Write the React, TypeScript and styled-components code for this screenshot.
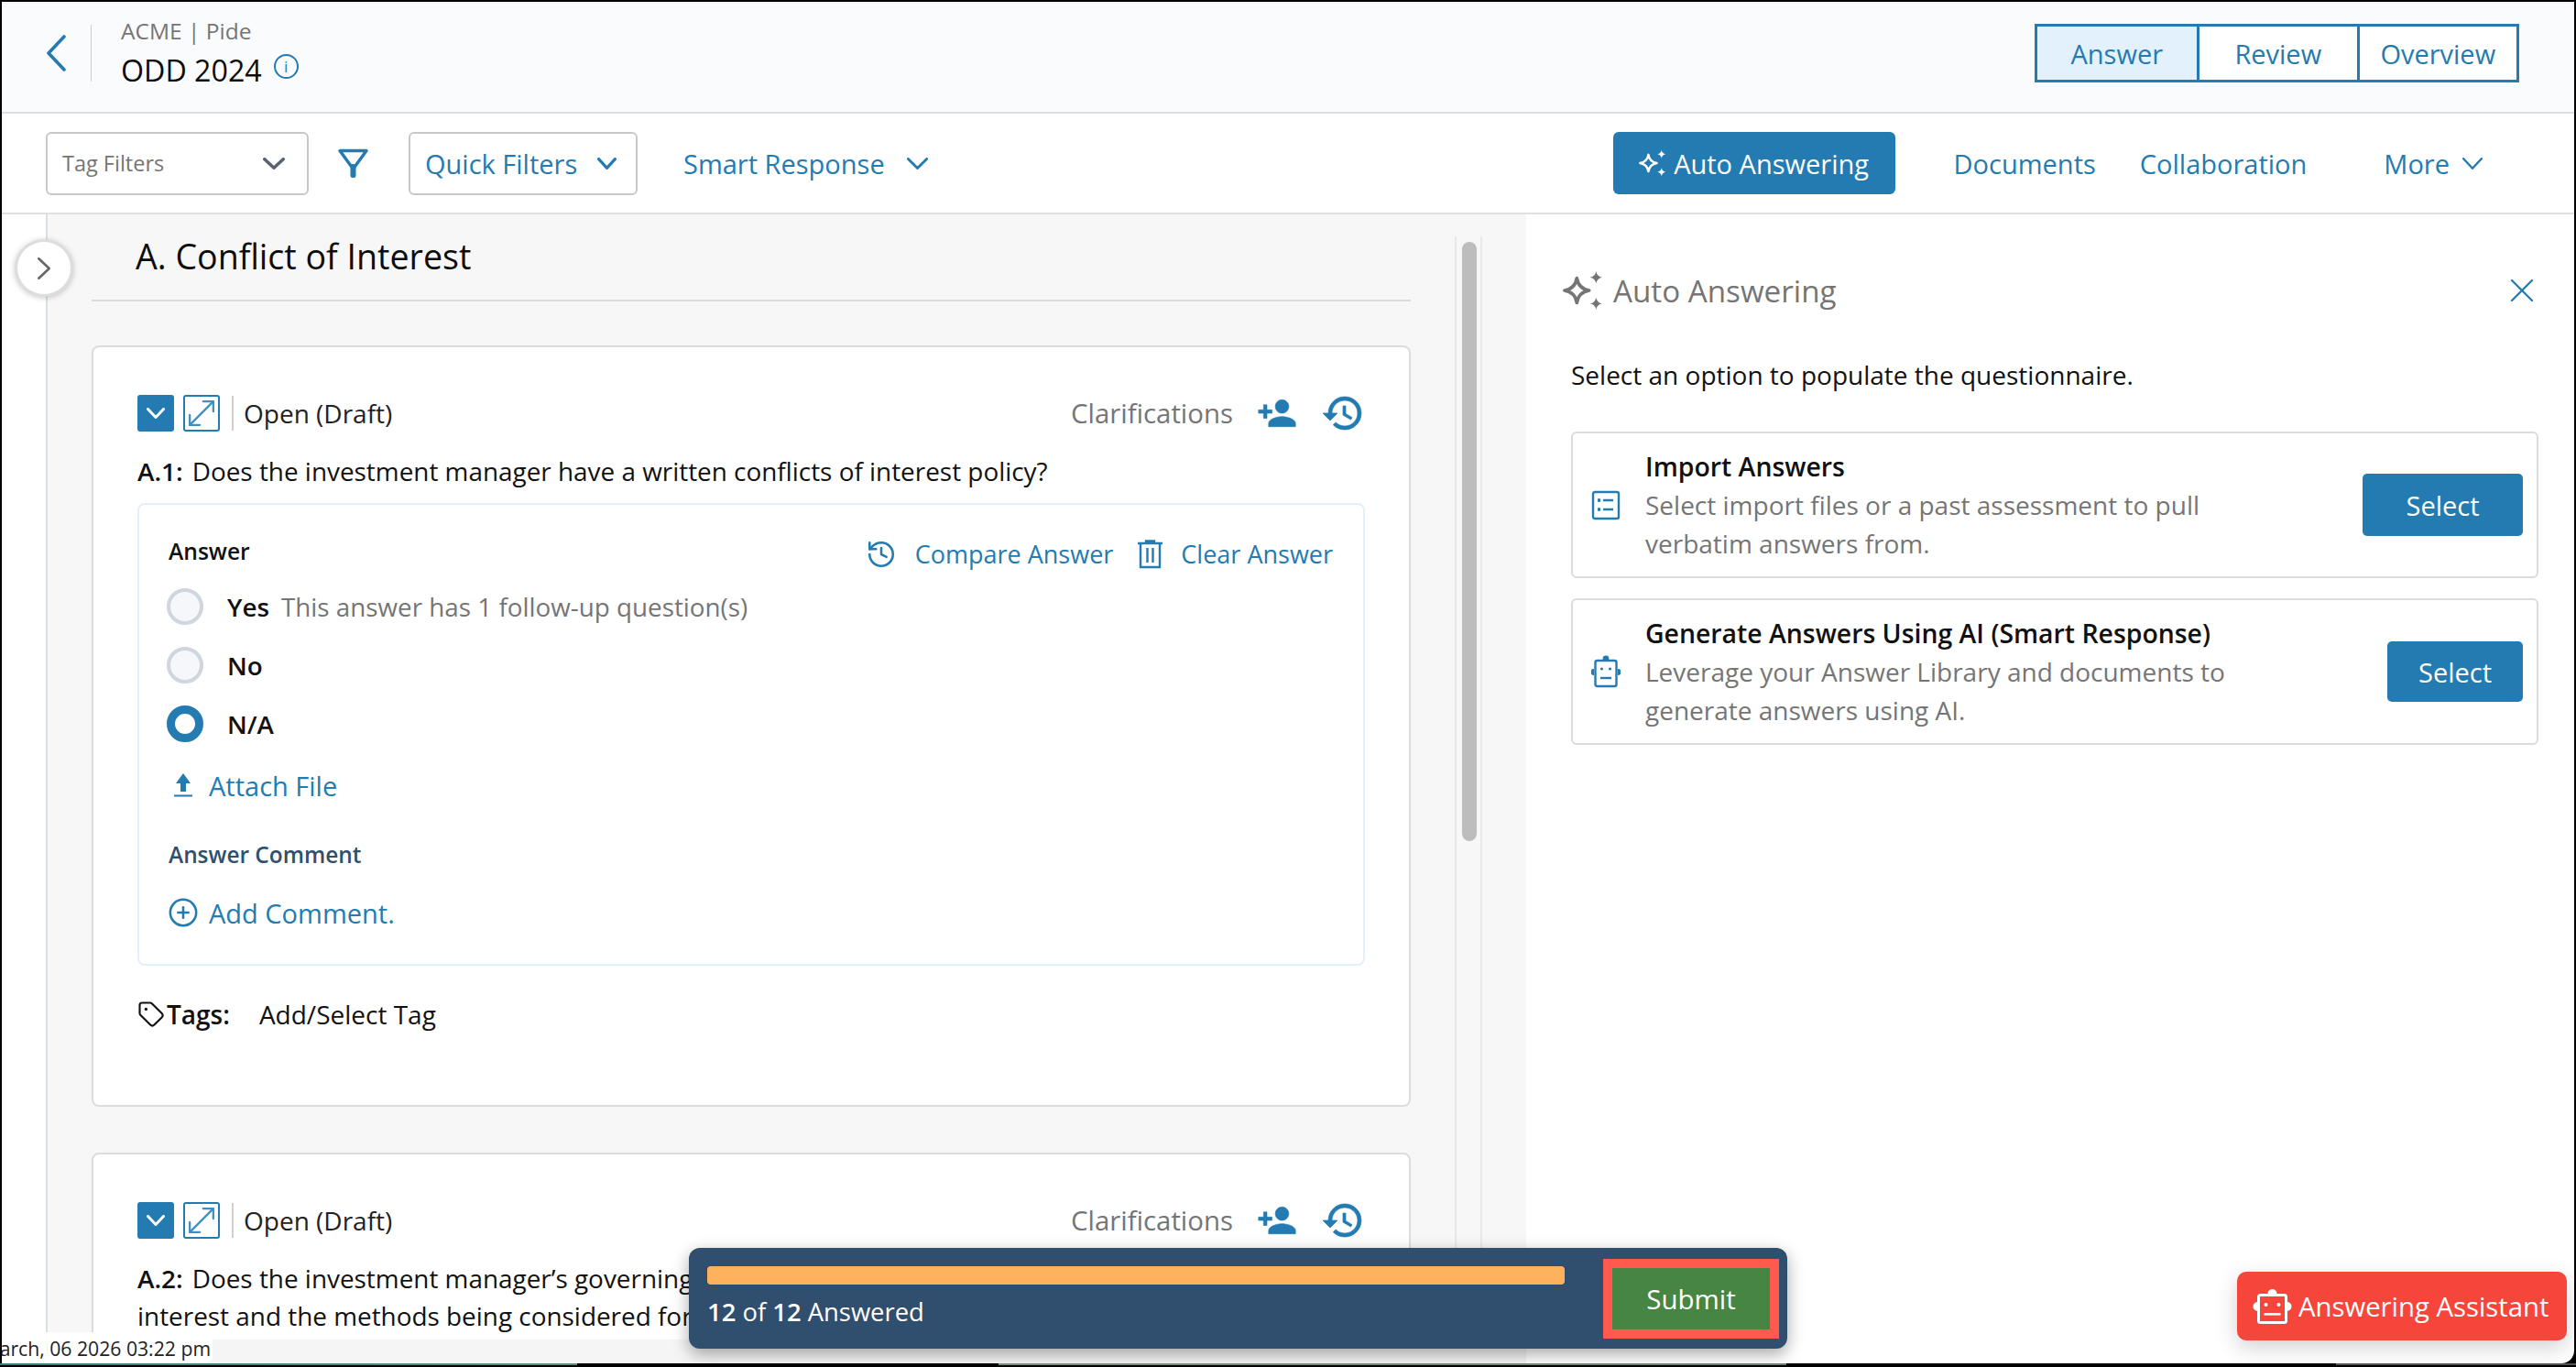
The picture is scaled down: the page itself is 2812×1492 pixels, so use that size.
import React from "react";
import styled, { createGlobalStyle } from "styled-components";
import { CirclePlus, History, MoveDiagonal, Tag, X } from "lucide-react";
import { MdHistory, MdPersonAdd } from "react-icons/md";

const BLUE = "#237bb1";
const FONT = `"Open Sans", "Noto Sans", "Liberation Sans", sans-serif`;

const Global = createGlobalStyle`
  html, body { margin: 0; padding: 0; background: #000; overflow: hidden; }
  * { box-sizing: border-box; }
  #root { width: 2812px; height: 1492px; }
`;

const Frame = styled.div`
  position: relative;
  width: 2812px;
  height: 1492px;
  padding: 2px 2px 4px 2px;
  background: #000;
  font-family: ${FONT};
  font-size: 28px;
  color: #111;
`;
const Peek = styled.div`
  position: absolute;
  left: 0;
  right: 0;
  bottom: 2px;
  height: 2px;
  background: linear-gradient(90deg, #3d7c78 0, #5f8d80 630px, #000 630px, #000 1090px, #7b8d80 1090px, #6d7c70 1950px, #000 1950px, #000 2550px, #555 2550px);
`;
const Window = styled.div`
  position: relative;
  z-index: 1;
  height: 100%;
  display: flex;
  flex-direction: column;
  overflow: hidden;
  background: #fff;
  border-bottom-right-radius: 14px;
`;

/* header */
const Header = styled.header`
  flex: none;
  height: 122px;
  display: flex;
  align-items: center;
  padding: 0 60px 8px 48px;
  background: #fafbfd;
  border-bottom: 2px solid #d8e0e6;
`;
const Back = styled.svg`
  width: 22px;
  height: 40px;
  color: ${BLUE};
`;
const VRule = styled.span`
  width: 1px;
  height: 62px;
  margin: 0 32px 0 27px;
  background: #c9ced2;
`;
const TitleBlock = styled.div`
  display: flex;
  flex-direction: column;
  gap: 8px;
`;
const Crumb = styled.div`
  font-size: 24.5px;
  line-height: 30px;
  color: #757575;
`;
const TitleRow = styled.div`
  display: flex;
  align-items: flex-start;
  gap: 13px;
`;
const PageTitle = styled.div`
  font-size: 32.2px;
  line-height: 40px;
  font-weight: 500;
  color: #0c0c0c;
`;
const Info = styled.span`
  width: 27px;
  height: 27px;
  margin-top: 2px;
  border: 2px solid ${BLUE};
  border-radius: 50%;
  display: flex;
  align-items: center;
  justify-content: center;
  color: ${BLUE};
  font-size: 17px;
  line-height: 1;
`;
const Tabs = styled.nav`
  margin-left: auto;
  display: flex;
  height: 64px;
  border: 3px solid ${BLUE};
`;
const TabItem = styled.div<{ $active?: boolean }>`
  width: 174.5px;
  display: flex;
  align-items: center;
  justify-content: center;
  font-size: 29px;
  color: ${BLUE};
  background: ${(p) => (p.$active ? "#e3f1fd" : "#fff")};
  & + & { border-left: 3px solid ${BLUE}; }
`;

/* toolbar */
const Toolbar = styled.div`
  flex: none;
  height: 110px;
  display: flex;
  align-items: center;
  padding: 0 100px 0 48px;
  border-bottom: 2px solid #e0e0e0;
`;
const SelectBox = styled.div<{ $w: number; $pr: number }>`
  width: ${(p) => p.$w}px;
  height: 69px;
  display: flex;
  align-items: center;
  justify-content: space-between;
  padding: 0 ${(p) => p.$pr}px 0 16px;
  border: 2px solid #c8c8c8;
  border-radius: 6px;
`;
const Placeholder = styled.span`
  font-size: 23.5px;
  color: #757575;
`;
const FilterIcon = styled.svg`
  width: 33px;
  height: 32px;
  margin: 0 44px 0 32px;
  color: ${BLUE};
`;
const BarLink = styled.span<{ $ml?: number; $gap?: number }>`
  display: inline-flex;
  align-items: center;
  gap: ${(p) => p.$gap ?? 0}px;
  margin-left: ${(p) => p.$ml ?? 0}px;
  font-size: 29px;
  color: ${BLUE};
  white-space: nowrap;
`;
const Spacer = styled.div`
  flex: 1;
`;
const AutoBtn = styled.button`
  width: 308px;
  height: 68px;
  display: flex;
  align-items: center;
  justify-content: center;
  gap: 8px;
  border: 0;
  border-radius: 6px;
  background: ${BLUE};
  color: #fff;
  font-family: inherit;
  font-size: 29px;
`;

/* body */
const Body = styled.div`
  flex: 1;
  min-height: 0;
  display: flex;
`;
const Rail = styled.div`
  flex: none;
  width: 50px;
  border-right: 2px solid #d8e0e6;
`;
const Collapse = styled.div`
  position: absolute;
  z-index: 2;
  left: 14px;
  top: 259px;
  width: 64px;
  height: 63px;
  display: flex;
  align-items: center;
  justify-content: center;
  border-radius: 50%;
  background: #fff;
  border: 3px solid #ddd;
  box-shadow: 0 1px 6px rgba(0, 0, 0, 0.22);
  color: #666;
`;
const Main = styled.main`
  flex: none;
  width: 1614px;
  display: flex;
  flex-direction: column;
  background: #f7f7f7;
`;
const MainRow = styled.div`
  flex: 1;
  min-height: 0;
  display: flex;
`;
const Scroller = styled.div`
  flex: none;
  width: 1440px;
  margin-left: 48px;
  overflow: hidden;
`;
const SectionHead = styled.div`
  height: 95px;
  display: flex;
  align-items: center;
  padding: 0 0 2px 48px;
  border-bottom: 2px solid #dcdcdc;
  font-size: 37.6px;
  font-weight: 500;
  color: #0c0c0c;
`;
const Card = styled.section<{ $mt: number }>`
  margin-top: ${(p) => p.$mt}px;
  width: 1440px;
  padding: 52px 48px 0;
  background: #fff;
  border: 2px solid #dcdcdc;
  border-radius: 8px;
  min-height: 831px;
`;
const CardTop = styled.div`
  height: 40px;
  display: flex;
  align-items: center;
`;
const Square = styled.span<{ $solid?: boolean }>`
  flex: none;
  width: 40px;
  height: 40px;
  margin-right: 10px;
  display: flex;
  align-items: center;
  justify-content: center;
  border-radius: 3px;
  border: 2px solid ${BLUE};
  background: ${(p) => (p.$solid ? BLUE : "#fff")};
  color: ${(p) => (p.$solid ? "#fff" : "#3f8fc1")};
  svg { flex: none; }
`;
const CardRule = styled.span`
  width: 2px;
  height: 38px;
  margin: 0 11px 0 3px;
  background: #cfcfcf;
`;
const Status = styled.span`
  font-size: 28px;
  color: #222;
`;
const Clarify = styled.span`
  margin-left: auto;
  font-size: 29.4px;
  color: #757575;
`;
const CardActions = styled.div`
  display: flex;
  align-items: center;
  margin-left: 26px;
  gap: 26px;
  color: ${BLUE};
  path:not([fill="none"]) { stroke: currentColor; stroke-width: 0.35px; }
`;
const Question = styled.p`
  margin: 23px 0 0;
  font-size: 27.9px;
  line-height: 41px;
  color: #111;
  b { font-weight: 600; margin-right: 10px; }
`;
const AnswerBox = styled.div`
  margin-top: 14px;
  padding: 29px 33px 40px 30px;
  border: 2px solid #e3f0fb;
  border-radius: 8px;
`;
const AnswerHead = styled.div`
  height: 44px;
  display: flex;
  align-items: center;
  padding-left: 2px;
`;
const AnswerLabel = styled.span`
  margin-top: -2px;
  font-size: 24.6px;
  font-weight: 600;
  color: #111;
`;
const HeadActions = styled.div`
  margin: 5px 0 0 auto;
  display: flex;
  align-items: center;
  color: ${BLUE};
  font-size: 27px;
`;
const ActionText = styled.span<{ $mr?: number }>`
  margin: 0 ${(p) => p.$mr ?? 0}px 0 20px;
`;
const Options = styled.div`
  margin-top: 18px;
  display: flex;
  flex-direction: column;
  gap: 24px;
`;
const OptionRow = styled.label`
  height: 40px;
  display: flex;
  align-items: center;
  gap: 26px;
  font-size: 27.8px;
  font-weight: 600;
`;
const Radio = styled.span<{ $on?: boolean }>`
  flex: none;
  width: 40px;
  height: 40px;
  border-radius: 50%;
  background: ${(p) => (p.$on ? "#fff" : "#f5f7fa")};
  border: ${(p) => (p.$on ? `9px solid ${BLUE}` : "4px solid #cfd6dd")};
`;
const Hint = styled.span`
  margin-left: -13px;
  font-weight: 400;
  color: #757575;
`;
const LinkRow = styled.div<{ $mt: number; $h: number }>`
  margin-top: ${(p) => p.$mt}px;
  height: ${(p) => p.$h}px;
  display: flex;
  align-items: center;
  color: ${BLUE};
  font-size: 29px;
`;
const IconSlot = styled.span`
  flex: none;
  width: 46px;
  display: flex;
  justify-content: center;
  padding-right: 10px;
`;
const CommentLabel = styled.div`
  margin: 46px 0 0 2px;
  height: 30px;
  line-height: 30px;
  font-size: 24.4px;
  font-weight: 600;
  color: #2f4f6f;
`;
const TagsRow = styled.div`
  margin-top: 38px;
  height: 30px;
  display: flex;
  align-items: center;
  font-size: 28px;
  b { font-weight: 600; margin: 0 32px 0 2px; }
`;
const Track = styled.div`
  flex: none;
  width: 30px;
  margin: 24px 0 0 48px;
  padding: 6px 4px 0 6px;
  border-left: 2px solid #e8e8e8;
  border-right: 2px solid #e8e8e8;
`;
const Thumb = styled.div`
  height: 654px;
  border-radius: 8px;
  background: #bdbdbd;
`;
const FootStrip = styled.div`
  flex: none;
  height: 26px;
  background: #f5f5f5;
`;

/* side panel */
const Side = styled.aside`
  flex: 1;
  padding: 61px 39px 0 49px;
`;
const SideHead = styled.div`
  height: 44px;
  margin: 0 -4px 0 -9px;
  display: flex;
  align-items: center;
  gap: 11px;
  font-size: 33.2px;
  color: #757575;
`;
const CloseBtn = styled.span`
  margin-left: auto;
  display: flex;
  color: ${BLUE};
`;
const Intro = styled.p`
  margin: 50px 0 42px;
  height: 40px;
  line-height: 40px;
  font-size: 28px;
  color: #111;
`;
const OptionCard = styled.div<{ $mt?: number }>`
  margin-top: ${(p) => p.$mt ?? 0}px;
  height: 160px;
  display: flex;
  align-items: center;
  padding: 0 15px 0 20px;
  border: 2px solid #dcdcdc;
  border-radius: 6px;
`;
const OptIcon = styled.svg`
  flex: none;
  width: 32px;
  height: 36px;
  margin-right: 27px;
  color: ${BLUE};
`;
const OptText = styled.div`
  flex: 1;
  line-height: 42px;
  font-size: 28px;
  color: #757575;
  h3 { margin: 0; font-size: 28.4px; line-height: 42px; font-weight: 600; color: #111; }
`;
const SelectBtn = styled.button<{ $w: number; $h: number }>`
  width: ${(p) => p.$w}px;
  height: ${(p) => p.$h}px;
  border: 0;
  border-radius: 5px;
  background: ${BLUE};
  color: #fff;
  font-family: inherit;
  font-size: 29px;
`;

/* overlays */
const Stamp = styled.div`
  position: absolute;
  z-index: 3;
  left: 0;
  bottom: 0;
  width: 230px;
  height: 34px;
  display: flex;
  align-items: center;
  justify-content: flex-end;
  overflow: hidden;
  white-space: nowrap;
  padding-right: 2px;
  border-radius: 0 8px 8px 0;
  background: rgba(255, 255, 255, 0.92);
  font-size: 21.2px;
  color: #222;
`;
const ProgressPanel = styled.div`
  position: absolute;
  z-index: 3;
  left: 750px;
  top: 1360px;
  width: 1199px;
  height: 110px;
  display: flex;
  align-items: flex-start;
  padding: 20px 8px 0 20px;
  border-radius: 12px;
  background: #304e6d;
  color: #fff;
  box-shadow: 0 6px 18px rgba(0, 0, 0, 0.35);
`;
const ProgressInfo = styled.div`
  flex: none;
  width: 936px;
  margin-right: 42px;
`;
const Bar = styled.div`
  height: 20px;
  border-radius: 4px;
  background: #ffb25e;
`;
const Count = styled.div`
  margin-top: 15px;
  line-height: 30px;
  font-size: 27.4px;
  b { font-weight: 600; }
`;
const SubmitBtn = styled.button`
  width: 172px;
  height: 67px;
  margin: 2px 0 0 10px;
  border: 0;
  border-radius: 0;
  background: #478642;
  color: #fff;
  font-family: inherit;
  font-size: 29.5px;
  outline: 10px solid #ff5a4d;
`;
const Assistant = styled.button`
  position: absolute;
  z-index: 3;
  left: 2440px;
  top: 1386px;
  width: 360px;
  height: 75px;
  display: flex;
  align-items: center;
  gap: 6px;
  padding: 0 0 0 16px;
  border: 0;
  border-radius: 10px;
  background: #f6453b;
  color: #fff;
  font-family: inherit;
  font-size: 29.3px;
  box-shadow: 0 8px 24px rgba(0, 0, 0, 0.18);
  white-space: nowrap;
`;

const Chev = ({ w, h, sw, dir = "down", color }: { w: number; h: number; sw: number; dir?: "down" | "right"; color?: string }) => (
  <svg width={w} height={h} viewBox={`0 0 ${w} ${h}`} fill="none" stroke={color ?? "currentColor"} strokeWidth={sw} strokeLinecap="round" strokeLinejoin="round" style={{ flex: "none" }}>
    {dir === "down" ? (
      <path d={`M${sw / 2} ${sw / 2}L${w / 2} ${h - sw / 2}L${w - sw / 2} ${sw / 2}`} />
    ) : (
      <path d={`M${sw / 2} ${sw / 2}L${w - sw / 2} ${h / 2}L${sw / 2} ${h - sw / 2}`} />
    )}
  </svg>
);

const Sparkle = ({ size, color }: { size: number; color: string }) => (
  <svg width={size} height={size} viewBox="0 0 46 46" style={{ color, flex: "none" }}>
    <path d="M16 9Q18 21 30 23Q18 25 16 37Q14 25 2 23Q14 21 16 9Z" fill="none" stroke="currentColor" strokeWidth="3.8" strokeLinejoin="round" />
    <path d="M38 1Q39 7 45 8Q39 9 38 15Q37 9 31 8Q37 7 38 1Z" fill="currentColor" />
    <path d="M38 31Q39 37 45 38Q39 39 38 45Q37 39 31 38Q37 37 38 31Z" fill="currentColor" />
  </svg>
);

const Robot = ({ width, height, sw = 3 }: { width: number; height: number; sw?: number }) => (
  <svg width={width} height={height} viewBox="0 0 44 38" style={{ flex: "none" }}>
    <circle cx="22" cy="5" r="5" fill="currentColor" />
    <path d="M6 14a5 5 0 0 0 0 10ZM38 14a5 5 0 0 1 0 10Z" fill="currentColor" />
    <rect x="7" y="6.5" width="30" height="30" rx="2" fill="#f6453b" stroke="currentColor" strokeWidth={sw} />
    <circle cx="15" cy="17" r="2" fill="currentColor" />
    <circle cx="29" cy="17" r="2" fill="currentColor" />
    <rect x="13" y="26" width="18" height="2.6" fill="currentColor" />
  </svg>
);

const Trash = () => (
  <svg width="27" height="32" viewBox="0 0 27 32" fill="none" stroke="currentColor" strokeWidth="2.4">
    <path d="M0 4H27M9 4V1.5H18V4" />
    <path d="M3 4V30H24V4" />
    <path d="M10.5 9V25M16.5 9V25" />
  </svg>
);

const Upload = () => (
  <svg width="20" height="26" viewBox="0 0 20 26" fill="currentColor">
    <path d="M10 0L18 11H13V20H7V11H2Z" />
    <rect x="0" y="23.5" width="20" height="2" />
  </svg>
);

const QuestionHeader = () => (
  <CardTop>
    <Square $solid>
      <Chev w={20} h={12} sw={3} />
    </Square>
    <Square>
      <MoveDiagonal size={44} strokeWidth={1.25} />
    </Square>
    <CardRule />
    <Status>Open (Draft)</Status>
    <Clarify>Clarifications</Clarify>
    <CardActions>
      <MdPersonAdd size={44} />
      <MdHistory size={48} />
    </CardActions>
  </CardTop>
);

export default function App() {
  return (
    <Frame>
      <Global />
      <Peek />
      <Window>
        <Header>
          <Back viewBox="0 0 22 40" fill="none" stroke="currentColor" strokeWidth="3.6" strokeLinecap="round" strokeLinejoin="round">
            <path d="M20 2L3 20L20 38" />
          </Back>
          <VRule />
          <TitleBlock>
            <Crumb>ACME | Pide</Crumb>
            <TitleRow>
              <PageTitle>ODD 2024</PageTitle>
              <Info>i</Info>
            </TitleRow>
          </TitleBlock>
          <Tabs>
            <TabItem $active>Answer</TabItem>
            <TabItem>Review</TabItem>
            <TabItem>Overview</TabItem>
          </Tabs>
        </Header>
        <Toolbar>
          <SelectBox $w={287} $pr={24}>
            <Placeholder>Tag Filters</Placeholder>
            <Chev w={24} h={13} sw={3.6} color="#5a6470" />
          </SelectBox>
          <FilterIcon viewBox="0 0 33 32" fill="none" stroke="currentColor" strokeWidth="3.4" strokeLinejoin="round">
            <path d="M2 2.5H31L17.5 21H15.5Z" />
            <rect x="13.5" y="17" width="6" height="15" rx="2.5" fill="currentColor" stroke="none" />
          </FilterIcon>
          <SelectBox $w={250} $pr={19}>
            <BarLink $gap={22}>
              Quick Filters
              <Chev w={21} h={13} sw={3.2} />
            </BarLink>
          </SelectBox>
          <BarLink $ml={50} $gap={24}>
            Smart Response
            <Chev w={23} h={13} sw={2.8} />
          </BarLink>
          <Spacer />
          <AutoBtn>
            <Sparkle size={30} color="#fff" />
            Auto Answering
          </AutoBtn>
          <BarLink $ml={64}>Documents</BarLink>
          <BarLink $ml={48}>Collaboration</BarLink>
          <BarLink $ml={84} $gap={14}>
            More
            <Chev w={22} h={13} sw={2.4} />
          </BarLink>
        </Toolbar>
        <Body>
          <Rail />
          <Main>
            <MainRow>
              <Scroller>
                <SectionHead>A. Conflict of Interest</SectionHead>
                <Card $mt={48}>
                  <QuestionHeader />
                  <Question>
                    <b>A.1:</b>Does the investment manager have a written conflicts of interest policy?
                  </Question>
                  <AnswerBox>
                    <AnswerHead>
                      <AnswerLabel>Answer</AnswerLabel>
                      <HeadActions>
                        <History size={34} strokeWidth={1.8} />
                        <ActionText $mr={27}>Compare Answer</ActionText>
                        <Trash />
                        <ActionText>Clear Answer</ActionText>
                      </HeadActions>
                    </AnswerHead>
                    <Options>
                      <OptionRow>
                        <Radio />
                        Yes
                        <Hint>This answer has 1 follow-up question(s)</Hint>
                      </OptionRow>
                      <OptionRow>
                        <Radio />
                        No
                      </OptionRow>
                      <OptionRow>
                        <Radio $on />
                        N/A
                      </OptionRow>
                    </Options>
                    <LinkRow $mt={32} $h={30}>
                      <IconSlot>
                        <Upload />
                      </IconSlot>
                      Attach File
                    </LinkRow>
                    <CommentLabel>Answer Comment</CommentLabel>
                    <LinkRow $mt={32} $h={32}>
                      <IconSlot>
                        <CirclePlus size={34} strokeWidth={1.8} />
                      </IconSlot>
                      Add Comment.
                    </LinkRow>
                  </AnswerBox>
                  <TagsRow>
                    <Tag size={30} strokeWidth={1.7} />
                    <b>Tags:</b>
                    Add/Select Tag
                  </TagsRow>
                </Card>
                <Card $mt={50}>
                  <QuestionHeader />
                  <Question>
                    <b>A.2:</b>Does the investment manager’s governing documents address conflicts of
                    <br />
                    interest and the methods being considered for resolving them?
                  </Question>
                </Card>
              </Scroller>
              <Track>
                <Thumb />
              </Track>
            </MainRow>
            <FootStrip />
          </Main>
          <Side>
            <SideHead>
              <Sparkle size={44} color="#757575" />
              Auto Answering
              <CloseBtn>
                <X size={44} strokeWidth={1.3} />
              </CloseBtn>
            </SideHead>
            <Intro>Select an option to populate the questionnaire.</Intro>
            <OptionCard>
              <OptIcon viewBox="0 0 32 36" fill="none" stroke="currentColor" strokeWidth="2.4">
                <rect x="2" y="4" width="28" height="29" rx="2" />
                <path d="M13 13H24M13 23H24" />
                <path d="M7 13H10M7 23H10" strokeWidth="3.6" />
              </OptIcon>
              <OptText>
                <h3>Import Answers</h3>
                Select import files or a past assessment to pull
                <br />
                verbatim answers from.
              </OptText>
              <SelectBtn $w={175} $h={68}>Select</SelectBtn>
            </OptionCard>
            <OptionCard $mt={22}>
              <OptIcon viewBox="0 0 32 36" fill="none" stroke="currentColor" strokeWidth="2.4">
                <circle cx="16" cy="4" r="3.4" fill="currentColor" stroke="none" />
                <path d="M3 15a3.4 3.4 0 0 0 0 7ZM29 15a3.4 3.4 0 0 1 0 7Z" fill="currentColor" stroke="none" />
                <rect x="4.5" y="6" width="23" height="28" rx="2" fill="#fff" />
                <circle cx="11.5" cy="15" r="1.6" fill="currentColor" stroke="none" />
                <circle cx="20.5" cy="15" r="1.6" fill="currentColor" stroke="none" />
                <path d="M10 25H22" />
              </OptIcon>
              <OptText>
                <h3>Generate Answers Using AI (Smart Response)</h3>
                Leverage your Answer Library and documents to
                <br />
                generate answers using AI.
              </OptText>
              <SelectBtn $w={148} $h={66}>Select</SelectBtn>
            </OptionCard>
          </Side>
        </Body>
        <Collapse>
          <Chev w={14} h={24} sw={2.6} dir="right" />
        </Collapse>
        <Stamp>March, 06 2026 03:22 pm</Stamp>
        <ProgressPanel>
          <ProgressInfo>
            <Bar />
            <Count>
              <b>12</b> of <b>12</b> Answered
            </Count>
          </ProgressInfo>
          <SubmitBtn>Submit</SubmitBtn>
        </ProgressPanel>
        <Assistant>
          <Robot width={45} height={38} />
          Answering Assistant
        </Assistant>
      </Window>
    </Frame>
  );
}
